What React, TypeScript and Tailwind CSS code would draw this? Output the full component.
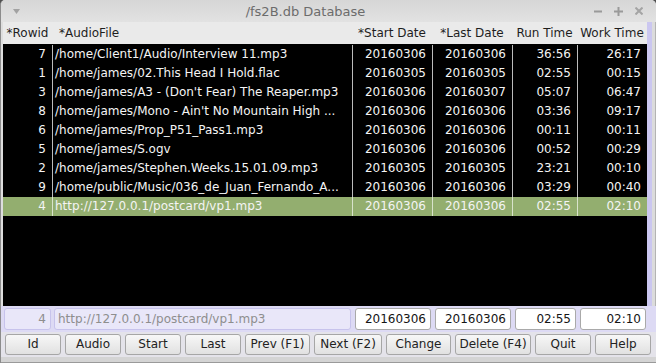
import React from 'react';

type Row = {
  id: string;
  file: string;
  start: string;
  last: string;
  run: string;
  work: string;
  selected?: boolean;
};

const rows: Row[] = [
  { id: '7', file: '/home/Client1/Audio/Interview 11.mp3', start: '20160306', last: '20160306', run: '36:56', work: '26:17' },
  { id: '1', file: '/home/james/02.This Head I Hold.flac', start: '20160305', last: '20160305', run: '02:55', work: '00:15' },
  { id: '3', file: "/home/james/A3 - (Don't Fear) The Reaper.mp3", start: '20160306', last: '20160307', run: '05:07', work: '06:47' },
  { id: '8', file: "/home/james/Mono - Ain't No Mountain High ...", start: '20160306', last: '20160306', run: '03:36', work: '09:17' },
  { id: '6', file: '/home/james/Prop_P51_Pass1.mp3', start: '20160306', last: '20160306', run: '00:11', work: '00:11' },
  { id: '5', file: '/home/james/S.ogv', start: '20160306', last: '20160306', run: '00:52', work: '00:29' },
  { id: '2', file: '/home/james/Stephen.Weeks.15.01.09.mp3', start: '20160305', last: '20160305', run: '23:21', work: '00:10' },
  { id: '9', file: '/home/public/Music/036_de_Juan_Fernando_A...', start: '20160306', last: '20160306', run: '03:29', work: '00:40' },
  { id: '4', file: 'http://127.0.0.1/postcard/vp1.mp3', start: '20160306', last: '20160306', run: '02:55', work: '02:10', selected: true },
];

const buttons = [
  { label: 'Id', w: 'w-[56px]' },
  { label: 'Audio', w: 'w-[56px]' },
  { label: 'Start', w: 'w-[56px]' },
  { label: 'Last', w: 'w-[56px]' },
  { label: 'Prev (F1)', w: 'w-[65px]' },
  { label: 'Next (F2)', w: 'w-[68px]' },
  { label: 'Change', w: 'w-[65px]' },
  { label: 'Delete (F4)', w: 'w-[76px]' },
  { label: 'Quit', w: 'w-[56px]' },
  { label: 'Help', w: 'w-[56px]' },
];

const cols = 'grid grid-cols-[49px_300px_80px_80px_65px_70px]';

function TitleBar() {
  return (
    <div className="flex h-[22px] items-center bg-gradient-to-b from-[#d6d6d6] to-[#e2e2e2]">
      <div className="flex w-[30px] items-center pl-[12px]">
        <svg width="7" height="5" viewBox="0 0 7 5">
          <path d="M0 0 L7 0 L3.5 5 Z" fill="#a2a2a2" />
        </svg>
      </div>
      <div className="flex-1 text-center text-[13px] leading-none text-[#6c6c6c]">/fs2B.db Database</div>
      <div className="flex w-[76px] items-center gap-[12px] pl-[14px]">
        <svg width="8" height="8" viewBox="0 0 8 8">
          <path d="M0 4.5 H8" stroke="#9a9a9a" strokeWidth="2" />
        </svg>
        <svg width="9" height="9" viewBox="0 0 9 9">
          <path d="M0 4.5 H9 M4.5 0 V9" stroke="#9a9a9a" strokeWidth="2" />
        </svg>
        <svg width="8" height="8" viewBox="0 0 8 8">
          <path d="M0.5 0.5 L7.5 7.5 M7.5 0.5 L0.5 7.5" stroke="#a4a4a4" strokeWidth="2" />
        </svg>
      </div>
    </div>
  );
}

function DataRow({ row }: { row: Row }) {
  const line = row.selected ? 'border-l border-[#d9e3cc]' : 'border-l border-[#bcbcbc]';
  const bg = row.selected ? 'bg-[#93ae6f]' : '';
  return (
    <div className={`${cols} h-[19px] items-stretch text-[12px] leading-[19px] text-[#f4f4f4] ${bg}`}>
      <div className="pr-[6px] text-right">{row.id}</div>
      <div className={`${line} overflow-hidden whitespace-nowrap pl-[2px]`}>{row.file}</div>
      <div className={`${line} pr-[6px] text-right`}>{row.start}</div>
      <div className={`${line} pr-[6px] text-right`}>{row.last}</div>
      <div className={`${line} pr-[6px] text-right`}>{row.run}</div>
      <div className={`${line} pr-[6px] text-right`}>{row.work}</div>
    </div>
  );
}

export default function App() {
  const sel = rows[rows.length - 1];
  return (
    <div className="h-[363px] w-[656px] overflow-hidden bg-[#505050] font-['DejaVu_Sans',sans-serif]">
      <div className="flex h-full flex-col overflow-hidden rounded-t-[5px] border-l border-[#8c8c8c] bg-[#d8d8d8]">
        <TitleBar />

        <div className="flex h-[284px]">
          <div className="w-[2px] bg-[#dedede]" />
          <div className="flex w-[644px] flex-col">
            <div className={`${cols} h-[22px] items-center bg-[#eaeaea] text-[12px] text-[#1e1e1e]`}>
              <div className="text-center">*Rowid</div>
              <div className="pl-[7px]">*AudioFile</div>
              <div className="text-center">*Start Date</div>
              <div className="text-center">*Last Date</div>
              <div className="text-center">Run Time</div>
              <div className="text-center">Work Time</div>
            </div>
            <div className="flex-1 bg-black pt-[1px]">
              {rows.map((r) => (
                <DataRow key={r.id} row={r} />
              ))}
            </div>
          </div>
          <div className="w-[5px] bg-[#cbc7f0]" />
          <div className="flex-1 border-r border-[#b4b4b4] bg-[#dcdcdc]" />
        </div>

        <div className="flex h-[26px] items-start bg-[#dddaf4] pt-[2px] text-[12px]">
          <div className="w-[2px]" />
          <div className={cols}>
            <div className="ml-[1px] h-[22px] w-[47px] rounded-[3px] border border-[#c7c3ec] bg-[#e9e7f9] pr-[4px] text-right leading-[20px] text-[#8e8e8e]">
              {sel.id}
            </div>
            <div className="ml-[2px] h-[22px] w-[297px] rounded-[3px] border border-[#c7c3ec] bg-[#e9e7f9] pl-[3px] leading-[20px] text-[#8e8e8e]">
              {sel.file}
            </div>
            <div className="ml-[3px] h-[22px] w-[76px] rounded-[3px] border border-[#a9a9a9] bg-white pr-[4px] text-right leading-[20px] text-[#151515]">
              {sel.start}
            </div>
            <div className="ml-[3px] h-[22px] w-[76px] rounded-[3px] border border-[#a9a9a9] bg-white pr-[4px] text-right leading-[20px] text-[#151515]">
              {sel.last}
            </div>
            <div className="ml-[3px] h-[22px] w-[61px] rounded-[3px] border border-[#a9a9a9] bg-white pr-[4px] text-right leading-[20px] text-[#151515]">
              {sel.run}
            </div>
            <div className="ml-[3px] h-[22px] w-[66px] rounded-[3px] border border-[#a9a9a9] bg-white pr-[4px] text-right leading-[20px] text-[#151515]">
              {sel.work}
            </div>
          </div>
        </div>

        <div className="flex h-[25px] items-start gap-[4px] bg-[#e4e3ea] pl-[4px] pt-[2px]">
          {buttons.map((b) => (
            <button
              key={b.label}
              type="button"
              className={`${b.w} h-[21px] shrink-0 rounded-[3px] border border-[#a6a6a6] bg-gradient-to-b from-[#f7f7f7] to-[#e1e1e1] text-center text-[12px] leading-[19px] text-[#222]`}
            >
              {b.label}
            </button>
          ))}
        </div>

        <div className="flex-1 border-b border-[#9a9a9a] bg-[#d4d4d4]" />
      </div>
    </div>
  );
}
